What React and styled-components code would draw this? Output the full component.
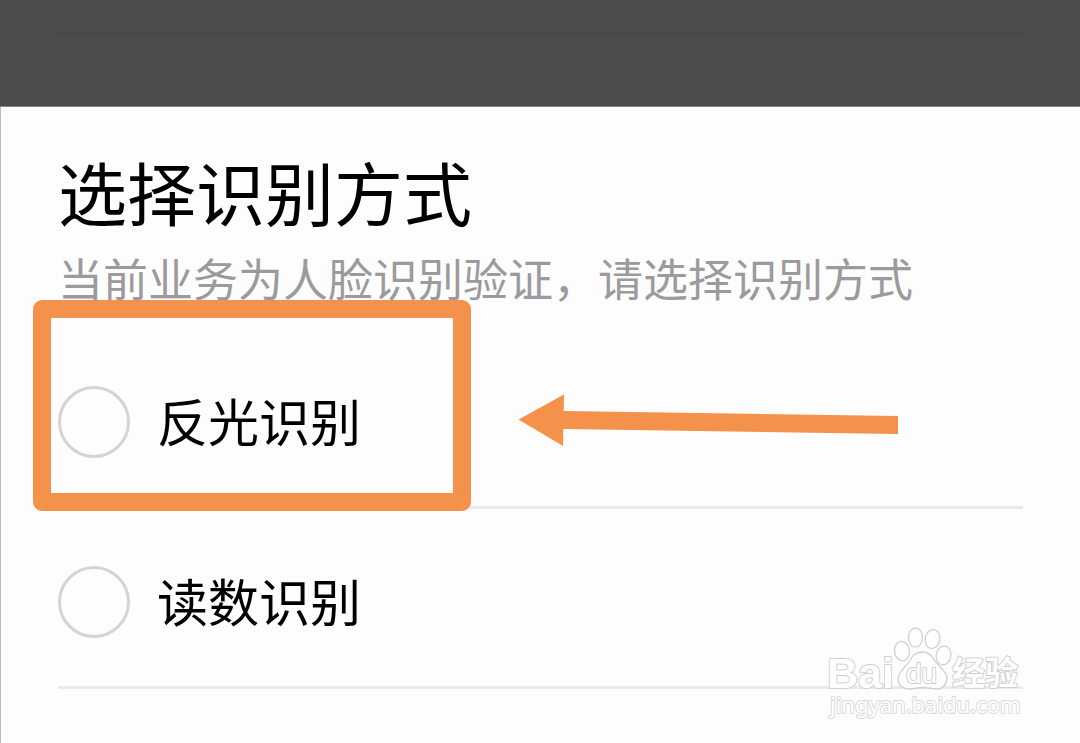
import React from "react";
import styled, { createGlobalStyle } from "styled-components";

const GlobalStyle = createGlobalStyle`
  * { box-sizing: border-box; }
  body {
    margin: 0;
    background: #fdfdfd;
    font-family: "Noto Sans CJK SC", "Liberation Sans", sans-serif;
  }
`;

const Page = styled.div`
  position: relative;
  display: flex;
  flex-direction: column;
  min-height: 100vh;
  overflow: hidden;
`;

const Backdrop = styled.div`
  height: 107px;
  padding: 32px 57px 0 58px;
  background: #4e4b4e;
  border-bottom: 1px solid #858385;
`;

const BackdropRule = styled.hr`
  margin: 0;
  border: 0;
  height: 3px;
  background: #4b484b;
`;

const Sheet = styled.main`
  flex: 1;
  padding: 40px 57px 52px 57px;
  border-left: 1px solid #bdbdbd;
  background: #fdfdfd;
`;

const Title = styled.h1`
  margin: 0 0 10px;
  font-size: 69px;
  line-height: 88px;
  font-weight: 400;
  color: #000;
  white-space: nowrap;
`;

const Subtitle = styled.p`
  margin: 0 0 18px;
  font-size: 45px;
  line-height: 66px;
  font-weight: 400;
  color: #9c9a9c;
  white-space: nowrap;
`;

const Options = styled.div`
  display: flex;
  flex-direction: column;
`;

const OptionRow = styled.div`
  position: relative;
  padding: 57px 0 48px;
  border-bottom: 3px solid #ebe9eb;
`;

const OptionLabel = styled.label`
  display: flex;
  align-items: flex-start;
  gap: 27px;
  height: 72px;
  font-size: 51px;
  line-height: 68px;
  color: #000;
  cursor: pointer;
`;

const Radio = styled.input`
  appearance: none;
  flex: none;
  width: 72px;
  height: 72px;
  margin: 0;
  border: 3px solid #d5d3d5;
  border-radius: 50%;
  background: #fdfdfd;

  &:checked {
    border: 20px solid #f4914a;
  }
`;

const Highlight = styled.div`
  position: absolute;
  top: -29px;
  left: -25px;
  width: 438px;
  height: 211px;
  border: 18px solid #f4914a;
  border-radius: 9px;
  pointer-events: none;
`;

const Arrow = styled.svg`
  position: absolute;
  top: 65px;
  left: 460px;
  pointer-events: none;
`;

const Watermark = styled.svg`
  position: absolute;
  right: 54px;
  bottom: 18px;
  pointer-events: none;
`;

const MarkText = styled.text`
  font-family: ${(p) => (p.$wide ? '"Noto Sans"' : '"Liberation Sans"')}, "Noto Sans CJK SC", sans-serif;
  font-size: ${(p) => p.$size}px;
  font-weight: ${(p) => p.$weight || 700};
  fill: #fff;
  stroke: ${(p) => p.$line || "#d0d0d0"};
  stroke-width: 2px;
  stroke-linejoin: round;
  paint-order: stroke;
`;

function Option({ value, label, children }) {
  return (
    <OptionRow>
      <OptionLabel htmlFor={value}>
        <Radio type="radio" id={value} name="method" value={value} />
        {label}
      </OptionLabel>
      {children}
    </OptionRow>
  );
}

function BaiduMark() {
  return (
    <Watermark width="200" height="100" viewBox="0 0 200 100" role="img" aria-label="Baidu 经验">
      <MarkText x="1" y="63" $size={43}>Bai</MarkText>
      <g fill="#fff" stroke="#d0d0d0" strokeWidth="1.3">
        <ellipse cx="76" cy="26" rx="7.5" ry="9.7" transform="rotate(-8 76 26)" />
        <ellipse cx="89.5" cy="12.5" rx="7" ry="9.7" />
        <ellipse cx="106.5" cy="14" rx="7.3" ry="9.5" transform="rotate(10 106.5 14)" />
        <ellipse cx="117.5" cy="30.5" rx="7.3" ry="9.5" transform="rotate(10 117.5 30.5)" />
        <path d="M97 27C89 27 86 31 83 37C79 43 72 47 72 54C72 60 77 64 83 64C88 64 92 62.500 97 62.500C102 62.500 106 64 111 64C117 64 121.500 58 121 52C120 46 113 42 109 36C106 31 103 27 97 27Z" />
      </g>
      <MarkText x="80" y="58" $size={28} $weight={400}>du</MarkText>
      <MarkText x="126" y="60" $size={33}>经验</MarkText>
      <MarkText x="4" y="88" $size={22} $weight={400} $line="#dadada" $wide>jingyan.baidu.com</MarkText>
    </Watermark>
  );
}

export default function App() {
  return (
    <>
      <GlobalStyle />
      <Page>
        <Backdrop>
          <BackdropRule />
        </Backdrop>
        <Sheet>
          <Title>选择识别方式</Title>
          <Subtitle>当前业务为人脸识别验证，请选择识别方式</Subtitle>
          <Options role="radiogroup" aria-label="选择识别方式">
            <Option value="reflect" label="反光识别">
              <Highlight />
              <Arrow width="382" height="53" viewBox="0 0 382 53" aria-hidden="true">
                <path d="M0.500 25.500L46 0.500L45.700 17L380 22V40L45.300 35L45 52Z" fill="#f4914a" />
              </Arrow>
            </Option>
            <Option value="digits" label="读数识别" />
          </Options>
        </Sheet>
        <BaiduMark />
      </Page>
    </>
  );
}
